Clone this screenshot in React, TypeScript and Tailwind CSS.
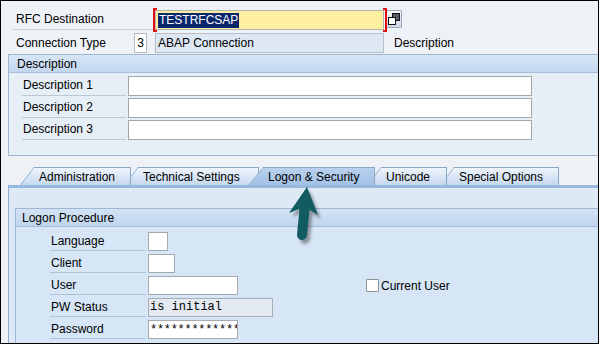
import React from "react";

type TabProps = {
  label: string;
  w: string;
  ml: string;
  z: string;
  active?: boolean;
};

function Tab({ label, w, ml, z, active }: TabProps) {
  return (
    <div className={`relative h-[18px] ${w} ${ml} ${z}`}>
      <div className="absolute inset-0 bg-[#8ba8cb] [clip-path:polygon(14px_0,100%_0,100%_100%,0_100%)]" />
      <div
        className={`absolute top-[1px] left-[1px] right-[1px] bottom-0 [clip-path:polygon(13px_0,100%_0,100%_100%,0_100%)] ${
          active
            ? "bg-gradient-to-b from-[#b9d1ee] to-[#a3c1e6]"
            : "bg-gradient-to-b from-[#eef4fb] to-[#c6d8ee]"
        }`}
      />
      <span className="relative block pl-[19px] pt-[1px] leading-[18px] whitespace-nowrap">{label}</span>
    </div>
  );
}

function DescRow({ label }: { label: string }) {
  return (
    <div className="flex h-[20px]">
      <div className="ml-[13px] w-[104px] pl-[1px] border-b border-[#bcc7d4] leading-[19px]">{label}</div>
      <div className="ml-[2px] w-[404px] h-[20px] bg-white border border-[#a3a6aa]" />
    </div>
  );
}

function LogonRow({ label, children }: { label: string; children?: React.ReactNode }) {
  return (
    <div className="flex h-[19px] items-stretch">
      <div className="ml-[34px] w-[96px] pl-[1px] border-b border-[#b3c3d6] leading-[19px]">{label}</div>
      {children}
    </div>
  );
}

function CopyButton() {
  return (
    <div className="ml-[2px] w-[16px] h-[18px] border border-[#9aa8b9] rounded-[1px] bg-gradient-to-b from-[#f4f7fb] to-[#cfd9e6] flex items-center justify-center">
      <svg width="14" height="14" viewBox="0 0 14 14">
        <rect x="5.5" y="1.5" width="7" height="7" fill="#5a5f66" stroke="#111" />
        <rect x="1.5" y="5.5" width="7" height="7" fill="#fff" stroke="#111" />
      </svg>
    </div>
  );
}

export default function App() {
  return (
    <div className="relative w-[599px] h-[344px] overflow-hidden border border-black bg-[#eef2f7] text-[12px] text-black font-['Liberation_Sans',Arial,sans-serif]">
      {/* header fields */}
      <div className="flex h-[20px] mt-[9px] items-stretch">
        <div className="ml-[11px] w-[141px] pl-[4px] border-b border-[#c9d2dd] leading-[19px]">RFC Destination</div>
        <div className="relative ml-[2px] w-[229px] h-[20px] bg-[#fff0a0] border border-[#b3b3b3] flex items-center pl-[2px]">
          <span className="bg-[#0a266c] text-white leading-[15px] px-[1px]">TESTRFCSAP</span>
          <span className="absolute left-[-3px] top-[-3px] w-[4px] h-[24px] border-l-2 border-t-2 border-b-2 border-[#e01010]" />
          <span className="absolute right-[-4px] top-[-3px] w-[4px] h-[24px] border-r-2 border-t-2 border-b-2 border-[#e01010]" />
        </div>
        <CopyButton />
      </div>

      <div className="flex h-[20px] mt-[3px] items-stretch">
        <div className="ml-[11px] w-[121px] pl-[4px] leading-[20px]">Connection Type</div>
        <div className="ml-[1px] w-[13px] h-[20px] bg-white border border-[#b7bcc3] text-center leading-[18px]">3</div>
        <div className="ml-[8px] w-[229px] h-[20px] bg-[#dde8f4] border border-[#b6bec8] pl-[2px] leading-[18px]">ABAP Connection</div>
        <div className="ml-[10px] leading-[20px]">Description</div>
      </div>

      {/* Description group */}
      <div className="ml-[7px] mt-[1px] border-l border-t border-b border-[#9db5d1] bg-[#e6eef6]">
        <div className="h-[18px] pl-[8px] leading-[18px] bg-gradient-to-b from-[#d8e6f5] to-[#c2d7ee] border-b border-[#a9bfd9]">
          Description
        </div>
        <div className="flex flex-col gap-[2px] pt-[3px] pb-[15px]">
          <DescRow label="Description 1" />
          <DescRow label="Description 2" />
          <DescRow label="Description 3" />
        </div>
      </div>

      {/* Tabs */}
      <div className="flex mt-[11px] ml-[19px]">
        <Tab label="Administration" w="w-[111px]" ml="ml-0" z="z-[5]" />
        <Tab label="Technical Settings" w="w-[135px]" ml="-ml-[7px]" z="z-[4]" />
        <Tab label="Logon & Security" w="w-[126px]" ml="-ml-[10px]" z="z-[6]" active />
        <Tab label="Unicode" w="w-[80px]" ml="-ml-[8px]" z="z-[3]" />
        <Tab label="Special Options" w="w-[119px]" ml="-ml-[7px]" z="z-[2]" />
      </div>

      {/* Tab panel */}
      <div className="ml-[7px] h-[170px] border-l border-[#8fadd2] border-t-[3px] border-t-[#98b7dd] bg-[#dde9f5] pt-[20px]">
        <div className="ml-[6px] h-full border-l border-t border-[#9fb8d6] bg-[#d6e6f6]">
          <div className="h-[18px] pl-[6px] leading-[18px] bg-gradient-to-b from-[#d3e3f4] to-[#c0d5ed] border-b border-[#a6bedb]">
            Logon Procedure
          </div>
          <div className="flex flex-col gap-[3px] pt-[5px]">
            <LogonRow label="Language">
              <div className="ml-[2px] w-[20px] bg-white border border-[#a5a9ae]" />
            </LogonRow>
            <LogonRow label="Client">
              <div className="ml-[2px] w-[27px] bg-white border border-[#a5a9ae]" />
            </LogonRow>
            <LogonRow label="User">
              <div className="ml-[2px] w-[90px] bg-white border border-[#a5a9ae]" />
              <div className="ml-[128px] flex items-center">
                <div className="w-[13px] h-[13px] bg-white border border-[#8e9196] rounded-[1px]" />
                <span className="ml-[2px]">Current User</span>
              </div>
            </LogonRow>
            <LogonRow label="PW Status">
              <div className="ml-[2px] w-[125px] bg-[#e3eaf2] border border-[#a9adb2] pl-[1px] leading-[17px] font-['Liberation_Mono',monospace] text-[12px]">
                is initial
              </div>
            </LogonRow>
            <LogonRow label="Password">
              <div className="ml-[2px] w-[90px] bg-white border border-[#a5a9ae] pl-[1px] overflow-hidden whitespace-nowrap leading-[19px] tracking-[-0.3px] font-['Liberation_Mono',monospace] text-[12px]">
                *************
              </div>
            </LogonRow>
          </div>
        </div>
      </div>

      {/* Arrow pointing to the tab */}
      <svg className="absolute left-[283px] top-[184px] z-10" width="46" height="64" viewBox="0 0 46 64">
        <defs>
          <filter id="sh" x="-50%" y="-50%" width="200%" height="200%">
            <feGaussianBlur stdDeviation="1.6" />
          </filter>
        </defs>
        <g transform="translate(3 4)" fill="#333" opacity="0.45" filter="url(#sh)">
          <polygon points="23,2 34,30 26,25 15,24 5,28" />
          <line x1="20.5" y1="24" x2="18" y2="50" stroke="#333" strokeWidth="10" strokeLinecap="round" />
        </g>
        <polygon points="23,2 34,30 26,25 15,24 5,28" fill="#125b61" />
        <line x1="20.5" y1="24" x2="18" y2="50" stroke="#125b61" strokeWidth="10" strokeLinecap="round" />
      </svg>
    </div>
  );
}
